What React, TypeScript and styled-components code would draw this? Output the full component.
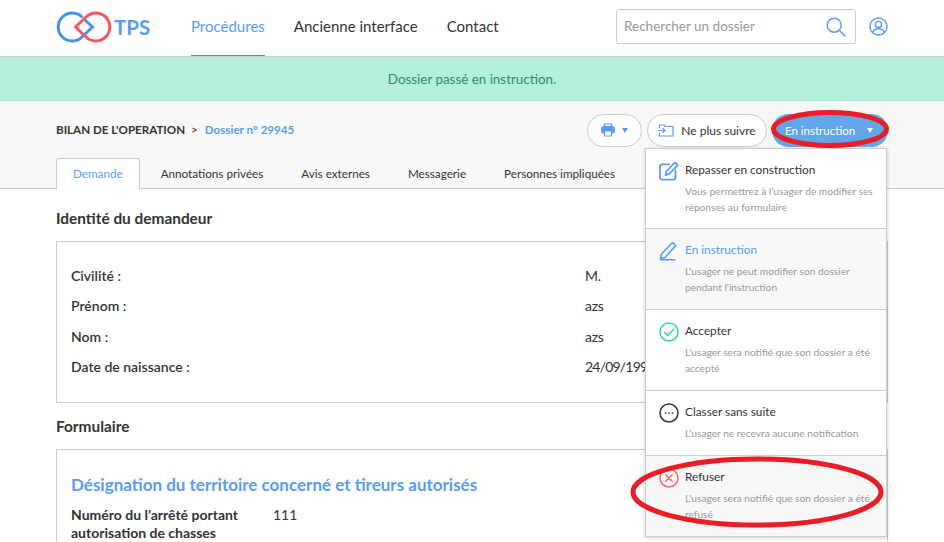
import React from 'react';
import styled, { createGlobalStyle } from 'styled-components';

const BLUE = '#5a9bf6';
const DARK = '#333333';
const FONT = `Lato, "Open Sans", sans-serif`;

const GlobalStyle = createGlobalStyle`
  html, body {
    margin: 0;
    padding: 0;
    height: 100%;
    overflow: hidden;
    background: #fff;
  }
  body {
    font-family: ${FONT};
    font-size: 14px;
    color: ${DARK};
  }
  * { box-sizing: border-box; }
  svg { flex-shrink: 0; }
`;

const items = [
  { icon: 'edit', title: 'Repasser en construction', lines: ["Vous permettrez à l'usager de modifier ses", 'réponses au formulaire'], height: 80 },
  { icon: 'pen', title: 'En instruction', lines: ["L'usager ne peut modifier son dossier", "pendant l'instruction"], height: 81, active: true, grey: true },
  { icon: 'check', title: 'Accepter', lines: ["L'usager sera notifié que son dossier a été", 'accepté'], height: 81 },
  { icon: 'dots', title: 'Classer sans suite', lines: ["L'usager ne recevra aucune notification"], height: 65 },
  { icon: 'cross', title: 'Refuser', lines: ["L'usager sera notifié que son dossier a été", 'refusé'], height: 80, grey: true },
];

const identity = [
  ['Civilité :', 'M.'],
  ['Prénom :', 'azs'],
  ['Nom :', 'azs'],
  ['Date de naissance :', '24/09/1999'],
];

const tabs = ['Demande', 'Annotations privées', 'Avis externes', 'Messagerie', 'Personnes impliquées'];

const Logo = () => (
  <svg width="56" height="32" viewBox="55 11 56 32" fill="none" strokeWidth="3">
    <path d="M81.5 17.5A14 14 0 1 0 81.5 36.5L91.5 27L83 19" stroke="#4a90f0" />
    <path d="M85 17A14 14 0 1 1 85 37L74.5 27Z" stroke="#f8585d" strokeLinejoin="round" />
  </svg>
);

const MenuIcon = ({ name }: { name: string }) => {
  if (name === 'edit') {
    return (
      <svg width="20" height="20" viewBox="0 0 20 20" fill="none" stroke={BLUE} strokeWidth="1.8" strokeLinejoin="round" strokeLinecap="round">
        <path d="M16.5 9.5V16.5A2.2 2.2 0 0 1 14.3 18.7H3.2A2.2 2.2 0 0 1 1 16.5V5.5A2.2 2.2 0 0 1 3.2 3.3H10.5" />
        <path d="M6.5 14L7.3 10.5L15.8 1.5L18.7 4.2L10 13.2Z" />
      </svg>
    );
  }
  if (name === 'pen') {
    return (
      <svg width="20" height="20" viewBox="0 0 20 20" fill="none" stroke={BLUE} strokeWidth="1.6" strokeLinejoin="round" strokeLinecap="round">
        <path d="M1.5 17.5L2.5 13L13.5 1.5L16.8 4.5L6 16.5Z" />
        <path d="M1.5 18.7H16" />
      </svg>
    );
  }
  const colour = name === 'check' ? '#38d6a0' : name === 'cross' ? '#f8686d' : DARK;
  return (
    <svg width="20" height="20" viewBox="0 0 20 20" fill="none" stroke={colour} strokeWidth="1.5" strokeLinecap="round" strokeLinejoin="round">
      <circle cx="10" cy="10" r="9" />
      {name === 'check' && <path d="M5.5 10.2L8.8 13.5L14.8 7" />}
      {name === 'cross' && <path d="M6.8 6.8L13.2 13.2M13.2 6.8L6.8 13.2" />}
      {name === 'dots' && <path d="M6.5 10H6.6M10 10H10.1M13.5 10H13.6" strokeWidth="1.7" />}
    </svg>
  );
};

const App = () => (
  <>
    <GlobalStyle />
    <Header>
      <Brand>
        <Logo />
        <BrandName>TPS</BrandName>
      </Brand>
      <Nav>
        <NavLink $active>Procédures</NavLink>
        <NavLink>Ancienne interface</NavLink>
        <NavLink>Contact</NavLink>
      </Nav>
      <SearchBox>
        <SearchText>Rechercher un dossier</SearchText>
        <svg width="20" height="20" viewBox="0 0 20 20" fill="none" stroke={BLUE} strokeWidth="1.5" strokeLinecap="round">
          <circle cx="8.2" cy="8.2" r="7" />
          <path d="M13.5 13.5L19 19" />
        </svg>
      </SearchBox>
      <svg width="19" height="19" viewBox="0 0 20 20" fill="none" stroke={BLUE} strokeWidth="1.5">
        <circle cx="10" cy="10" r="9" />
        <circle cx="10" cy="7.8" r="3.2" />
        <path d="M3.8 16C5 13.2 7 12.4 10 12.4S15 13.2 16.2 16" />
      </svg>
    </Header>
    <Flash>Dossier passé en instruction.</Flash>
    <SubHeader>
      <TopRow>
        <Breadcrumb>
          <strong>BILAN DE L'OPERATION</strong>
          <Sep>&gt;</Sep>
          <BreadcrumbLink>Dossier n° 29945</BreadcrumbLink>
        </Breadcrumb>
        <Actions>
          <PillButton $width={55}>
            <svg width="14" height="14" viewBox="0 0 14 14" fill="none" stroke={BLUE} strokeWidth="1.2" strokeLinejoin="round">
              <path d="M3.5 3.5V1H10.5V3.5" />
              <rect x="0.8" y="3.5" width="12.4" height="6.5" rx="1.6" fill={BLUE} />
              <path d="M3.5 8H10.5V13H3.5Z" fill="#fff" />
            </svg>
            <Caret $colour={BLUE} />
          </PillButton>
          <PillButton $width={120}>
            <svg width="16" height="13" viewBox="0 0 16 13" fill="none" stroke={BLUE} strokeWidth="1.2" strokeLinejoin="round" strokeLinecap="round">
              <path d="M1.5 4V1H6L7.5 2.5H15V12H1.5V9" />
              <path d="M0.5 6.5H7M4.8 4.3L7 6.5L4.8 8.7" />
            </svg>
            Ne plus suivre
          </PillButton>
          <StatusWrap>
            <StatusButton>
              En instruction
              <Caret $colour="#fff" />
            </StatusButton>
            <ButtonRing viewBox="0 0 118 38">
              <ellipse cx="59" cy="19" rx="56.5" ry="16.5" />
            </ButtonRing>
            <Menu>
              {items.map((item) => (
                <MenuItem key={item.title} $height={item.height} $grey={item.grey}>
                  <MenuIcon name={item.icon} />
                  <MenuText>
                    <MenuTitle $active={item.active}>{item.title}</MenuTitle>
                    {item.lines.map((line) => (
                      <MenuLine key={line}>{line}</MenuLine>
                    ))}
                  </MenuText>
                </MenuItem>
              ))}
              <RefuseRing viewBox="0 0 254 72">
                <ellipse cx="127" cy="36" rx="124" ry="33" />
              </RefuseRing>
            </Menu>
          </StatusWrap>
        </Actions>
      </TopRow>
      <Tabs>
        {tabs.map((tab, i) => (
          <Tab key={tab} $active={i === 0}>{tab}</Tab>
        ))}
      </Tabs>
    </SubHeader>
    <Content>
      <SectionTitle>Identité du demandeur</SectionTitle>
      <Card>
        {identity.map(([label, value]) => (
          <FieldRow key={label}>
            <FieldLabel>{label}</FieldLabel>
            <FieldValue $tight={value.includes('/')}>{value}</FieldValue>
          </FieldRow>
        ))}
      </Card>
      <SectionTitle>Formulaire</SectionTitle>
      <FormCard>
        <FormTitle>Désignation du territoire concerné et tireurs autorisés</FormTitle>
        <FormRow>
          <FormLabel>Numéro du l’arrêté portant autorisation de chasses</FormLabel>
          <span>111</span>
        </FormRow>
      </FormCard>
    </Content>
  </>
);

export default App;

const Header = styled.header`
  display: flex;
  align-items: center;
  height: 57px;
  padding: 0 56px 3px;
  background: #fff;
  border-bottom: 1px solid #cccccc;
`;

const Brand = styled.div`
  display: flex;
  align-items: center;
  gap: 2px;
  width: 135px;
`;

const BrandName = styled.span`
  font-size: 20.5px;
  font-weight: 700;
  color: ${BLUE};
`;

const Nav = styled.nav`
  display: flex;
  align-self: flex-start;
  gap: 29px;
  height: 56px;
`;

const NavLink = styled.a<{ $active?: boolean }>`
  display: flex;
  align-items: center;
  padding-bottom: 3px;
  font-size: 15px;
  color: ${(p) => (p.$active ? BLUE : DARK)};
  border-bottom: 1px solid ${(p) => (p.$active ? '#4d86e0' : 'transparent')};
`;

const SearchBox = styled.div`
  display: flex;
  align-items: center;
  justify-content: space-between;
  width: 240px;
  height: 35px;
  margin-left: auto;
  margin-right: 13px;
  padding: 0 9px 0 7px;
  border: 1px solid #cccccc;
  border-radius: 3px;
`;

const SearchText = styled.span`
  padding-bottom: 1px;
  font-size: 13.5px;
  color: #999999;
`;

const Flash = styled.div`
  display: flex;
  align-items: center;
  justify-content: center;
  height: 44px;
  background: #b4f0da;
  border-bottom: 1px solid #a5e8d0;
  font-size: 13.4px;
  color: #2e8b6a;
`;

const SubHeader = styled.div`
  height: 88px;
  padding: 0 56px;
  background: #f8f8f8;
  border-bottom: 1px solid #cccccc;
`;

const TopRow = styled.div`
  display: flex;
  align-items: center;
  justify-content: space-between;
  height: 57px;
  padding-top: 2px;
`;

const Breadcrumb = styled.div`
  display: flex;
  align-items: center;
  padding-bottom: 3px;
  font-size: 11.6px;
  strong {
    font-weight: 700;
  }
`;

const Sep = styled.span`
  margin: 0 7px 0 6px;
`;

const BreadcrumbLink = styled.span`
  font-weight: 700;
  color: ${BLUE};
`;

const Actions = styled.div`
  display: flex;
  align-items: center;
  gap: 5px;
`;

const PillButton = styled.div<{ $width: number }>`
  display: flex;
  align-items: center;
  justify-content: center;
  gap: 7px;
  width: ${(p) => p.$width}px;
  height: 33px;
  padding-bottom: 1px;
  border: 1px solid #cccccc;
  border-radius: 17px;
  background: #fff;
  font-size: 12px;
  color: ${DARK};
`;

const Caret = styled.i<{ $colour: string }>`
  width: 0;
  height: 0;
  border-left: 3.5px solid transparent;
  border-right: 3.5px solid transparent;
  border-top: 5px solid ${(p) => p.$colour};
`;

const StatusWrap = styled.div`
  position: relative;
`;

const StatusButton = styled.div`
  display: flex;
  align-items: center;
  justify-content: space-between;
  width: 116px;
  height: 33px;
  padding: 0 15px 1px 13px;
  border-radius: 17px;
  background: #62a6ea;
  font-size: 11.5px;
  color: #fff;
`;

const ButtonRing = styled.svg`
  position: absolute;
  left: -1px;
  top: -4px;
  width: 118px;
  height: 38px;
  fill: none;
  stroke: #ed1c24;
  stroke-width: 5;
`;

const Menu = styled.div`
  position: absolute;
  top: 34px;
  right: 1px;
  z-index: 2;
  width: 242px;
  background: #fff;
  border: 1px solid #cccccc;
  box-shadow: 0 1px 4px rgba(0, 0, 0, 0.2);
`;

const MenuItem = styled.div<{ $height: number; $grey?: boolean }>`
  display: flex;
  gap: 6px;
  height: ${(p) => p.$height}px;
  padding: 12px 12px 0 13px;
  background: ${(p) => (p.$grey ? '#f8f8f8' : '#fff')};
  border-bottom: 1px solid #cccccc;
  &:last-of-type {
    border-bottom: 0;
  }
`;

const MenuText = styled.div`
  display: flex;
  flex-direction: column;
`;

const MenuTitle = styled.div<{ $active?: boolean }>`
  margin-bottom: 4px;
  font-size: 11.8px;
  line-height: 18px;
  color: ${(p) => (p.$active ? BLUE : DARK)};
`;

const MenuLine = styled.div`
  font-size: 10.2px;
  line-height: 16px;
  color: #999999;
  white-space: nowrap;
`;

const RefuseRing = styled.svg`
  position: absolute;
  left: -16px;
  bottom: 8px;
  width: 254px;
  height: 72px;
  fill: none;
  stroke: #ed1c24;
  stroke-width: 5;
`;

const Tabs = styled.div`
  display: flex;
  gap: 4px;
  height: 30px;
`;

const Tab = styled.div<{ $active?: boolean }>`
  display: flex;
  align-items: center;
  height: 31px;
  padding: 0 16px 3px;
  font-size: 11.7px;
  color: ${(p) => (p.$active ? BLUE : DARK)};
  background: ${(p) => (p.$active ? '#fff' : 'transparent')};
  border: 1px solid ${(p) => (p.$active ? '#cccccc' : 'transparent')};
  border-bottom: 0;
  border-radius: 3px 3px 0 0;
`;

const Content = styled.main`
  padding: 6px 56px 0;
`;

const SectionTitle = styled.h2`
  margin: 0;
  height: 46px;
  padding-top: 14px;
  font-size: 15.4px;
  line-height: 18px;
  font-weight: 700;
  color: ${DARK};
`;

const Card = styled.div`
  height: 162px;
  padding: 18px 14px;
  border: 1px solid #cccccc;
`;

const FieldRow = styled.div`
  display: grid;
  grid-template-columns: 514px 1fr;
  height: 30.5px;
  align-items: center;
  font-size: 14px;
`;

const FieldLabel = styled.span`
  font-weight: 600;
`;

const FieldValue = styled.span<{ $tight?: boolean }>`
  letter-spacing: ${(p) => (p.$tight ? '-0.8px' : '-0.3px')};
`;

const FormCard = styled.div`
  padding: 25px 14px;
  border: 1px solid #cccccc;
`;

const FormTitle = styled.h3`
  margin: 0 0 11px;
  font-size: 17px;
  line-height: 20px;
  font-weight: 700;
  color: ${BLUE};
`;

const FormRow = styled.div`
  display: grid;
  grid-template-columns: 202px 1fr;
  font-size: 14px;
  line-height: 18px;
`;

const FormLabel = styled.span`
  font-weight: 700;
`;
